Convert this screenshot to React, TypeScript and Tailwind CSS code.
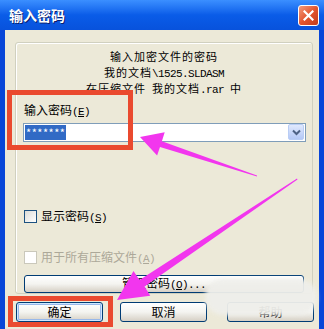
import React from "react";

const font = { fontFamily: '"Noto Sans CJK SC", "Noto Sans", sans-serif' };

// latin runs in a half-width mono face, like the old bitmap dialog font
function Mix({ text, cjk = "" }: { text: string; cjk?: string }) {
    const runs = text.match(/[\x00-\x7f]+|[^\x00-\x7f]+/g) || [];
    return (
        <>
            {runs.map((r, i) =>
                /^[\x00-\x7f]/.test(r) ? (
                    <span key={i} className="whitespace-pre text-[11px] tracking-[-0.6px]" style={{ fontFamily: '"Liberation Mono", monospace' }}>
                        {r}
                    </span>
                ) : (
                    <span key={i} className={cjk}>
                        {r}
                    </span>
                ),
            )}
        </>
    );
}

function Key({ k }: { k: string }) {
    return (
        <>
            <Mix text="(" />
            <span className="underline">
                <Mix text={k} />
            </span>
            <Mix text=")" />
        </>
    );
}

function XpButton({ label, primary, className }: { label: React.ReactNode; primary?: boolean; className: string }) {
    return (
        <div
            className={`flex items-center justify-center rounded-[3px] border border-[#003c74] bg-gradient-to-b from-[#ffffff] via-[#f4f4f0] to-[#d6d0c5] text-[12px] leading-none text-black ${primary ? "shadow-[inset_0_0_0_1px_#cee7ff,inset_0_0_0_2px_#98b8ea]" : ""} ${className}`}
        >
            {label}
        </div>
    );
}

const line = "text-[11px] tracking-[1px]";

export default function App() {
    return (
        <div className="relative flex h-[329px] w-[324px] flex-col overflow-hidden bg-[#0846d8]" style={font}>
            {/* title bar */}
            <div className="flex h-[30px] items-center justify-between bg-gradient-to-b from-[#3b8fff] via-[#0a5ce8] to-[#0852dc] pl-[9px] pr-[5px]">
                <span className="text-[14px] font-bold text-white [text-shadow:1px_1px_0_#0a1e6e]">输入密码</span>
                <div className="flex h-[21px] w-[21px] items-center justify-center rounded-[3px] border border-white bg-gradient-to-br from-[#f39a7a] via-[#e2552f] to-[#c23c1c]">
                    <svg width="11" height="11" viewBox="0 0 11 11">
                        <path d="M1.5 1.5 L9.5 9.5 M9.5 1.5 L1.5 9.5" stroke="#fff" strokeWidth="2.2" strokeLinecap="square" />
                    </svg>
                </div>
            </div>

            {/* body */}
            <div className="mx-[5px] flex flex-1 flex-col bg-[#ece9d8]">
                <div className="ml-[10px] mt-[12px] flex h-[252px] w-[298px] flex-col rounded-[3px] border border-[#d0d0bf] shadow-[inset_1px_1px_0_#fff] text-[12px] text-black">
                    <div className="mt-[5px] flex flex-col items-center">
                        <div className="h-[16px] leading-[16px]">
                            <Mix text="输入加密文件的密码" cjk={line} />
                        </div>
                        <div className="h-[16px] leading-[16px]">
                            <Mix text="我的文档\1525.SLDASM" cjk={line} />
                        </div>
                        <div className="h-[16px] leading-[16px]">
                            <Mix text="在压缩文件 我的文档.rar 中" cjk={line} />
                        </div>
                    </div>
                    <div className="ml-[8px] mt-[6px] leading-[15px]">
                        输入密码<Key k="E" />
                    </div>
                    <div className="ml-[7px] mt-[3px] flex h-[20px] w-[283px] items-center border border-[#7f9db9] bg-white pl-[1px] pr-[1px]">
                        <span className="flex h-[15px] items-center bg-[#316ac5] px-[1px] text-[11px] leading-none tracking-[0.5px] text-white">*******</span>
                        <div className="flex-1" />
                        <div className="flex h-[16px] w-[16px] items-center justify-center rounded-[2px] border border-[#b9cdf5] bg-gradient-to-b from-[#e0e9fd] to-[#b4c8f6]">
                            <svg width="9" height="7" viewBox="0 0 9 7">
                                <path d="M1 1.5 L4.5 5 L8 1.5" stroke="#4d6185" strokeWidth="2" fill="none" />
                            </svg>
                        </div>
                    </div>
                    <div className="ml-[8px] mt-[66px] flex items-center gap-[4px] leading-[15px]">
                        <div className="h-[13px] w-[13px] border border-[#1c5180] bg-gradient-to-br from-[#dcdcd7] to-[#ffffff]" />
                        <span>
                            显示密码<Key k="S" />
                        </span>
                    </div>
                    <div className="ml-[8px] mt-[23px] flex items-center gap-[4px] leading-[15px] text-[#aca899]">
                        <div className="h-[13px] w-[13px] border border-[#cac8bb] bg-white" />
                        <span>
                            用于所有压缩文件<Key k="A" />
                        </span>
                    </div>
                    <XpButton
                        className="ml-[8px] mt-[8px] h-[19px] w-[280px]"
                        label={
                            <span>
                                管理密码<Key k="O" />
                                <Mix text="..." />
                            </span>
                        }
                    />
                </div>

                <div className="ml-[11px] mt-[8px] flex">
                    <XpButton primary className="h-[20px] w-[87px]" label="确定" />
                    <XpButton className="ml-[17px] h-[20px] w-[87px]" label="取消" />
                    <XpButton className="ml-[20px] h-[20px] w-[87px]" label="帮助" />
                </div>
            </div>

            {/* annotations */}
            <div className="absolute left-[205px] top-[279px] h-[36px] w-[112px] rounded-[22px] bg-[#efefeb] opacity-95 blur-[2px]" />
            <div className="absolute left-[7px] top-[90px] h-[60px] w-[126px] border-[5px] border-[#ea4a2f]" />
            <div className="absolute left-[8px] top-[296px] h-[31px] w-[105px] border-[5px] border-[#ea4a2f]" />
            <svg className="absolute left-0 top-0" width="324" height="329" viewBox="0 0 324 329">
                <polygon points="140,137 164.7,132.2 161.9,141.2 257,175.6 257,176.4 160,146.9 157.1,155.4" fill="#f236ee" />
                <polygon points="117,300 133.5,270.9 139.5,279.9 297,178.5 297.5,179.5 144.5,286.6 150.3,295.8" fill="#f236ee" />
            </svg>
        </div>
    );
}
